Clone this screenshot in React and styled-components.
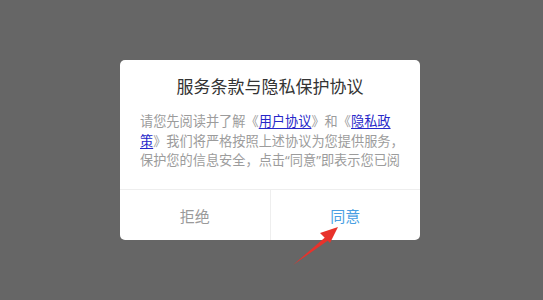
import React from "react"
import styled, { createGlobalStyle } from "styled-components"

const GlobalStyles = createGlobalStyle`
  html, body {
    margin: 0;
    padding: 0;
    background: #666666;
    font-family: "Noto Sans", "Noto Sans CJK SC", sans-serif;
  }
`

const Screen = styled.div`
  position: relative;
  width: 543px;
  height: 300px;
  box-sizing: border-box;
  padding: 60px 0 0 120px;
`

const Dialog = styled.div`
  width: 300px;
  background: #ffffff;
  border-radius: 5px;
  overflow: hidden;
`

const Title = styled.h2`
  margin: 0;
  padding-top: 15px;
  font-size: 17px;
  line-height: 24px;
  font-weight: 400;
  color: #333333;
  text-align: center;
`

const Body = styled.p`
  margin: 13px 16px 0 20px;
  padding-bottom: 18.5px;
  height: 58.5px;
  overflow: hidden;
  white-space: nowrap;
  font-size: 13.2px;
  line-height: 19.5px;
  color: #9c9c9c;
`

const DocLink = styled.a`
  color: #2727c9;
  text-decoration: underline;
  text-underline-offset: 2px;
`

const Footer = styled.div`
  display: flex;
  height: 50px;
  border-top: 1px solid #eeeeee;
`

const Action = styled.button`
  flex: 1;
  border: 0;
  background: transparent;
  font-family: inherit;
  font-size: 15px;
  color: ${(p) => (p.$primary ? "#4a9fe3" : "#9a9a9a")};
  & + & {
    border-left: 1px solid #eeeeee;
  }
`

const Arrow = styled.svg`
  position: absolute;
  left: 290px;
  top: 224px;
`

const App = () => (
  <>
    <GlobalStyles />
    <Screen>
      <Dialog>
        <Title>服务条款与隐私保护协议</Title>
        <Body>
          请您先阅读并了解《<DocLink>用户协议</DocLink>》和《<DocLink>隐私政</DocLink>
          <br />
          <DocLink>策</DocLink>》我们将严格按照上述协议为您提供服务，
          <br />
          保护您的信息安全，点击“同意”即表示您已阅
        </Body>
        <Footer>
          <Action>拒绝</Action>
          <Action $primary>同意</Action>
        </Footer>
      </Dialog>
      {/* red annotation arrow pointing at the agree button */}
      <Arrow width="52" height="44" viewBox="0 0 52 44">
        <path d="M3 41 L35.5 13 L38 16.5 Z" fill="#e8322b" />
        <path d="M48 3 L30 9 L40 19 Z" fill="#e8322b" />
      </Arrow>
    </Screen>
  </>
)

export default App
